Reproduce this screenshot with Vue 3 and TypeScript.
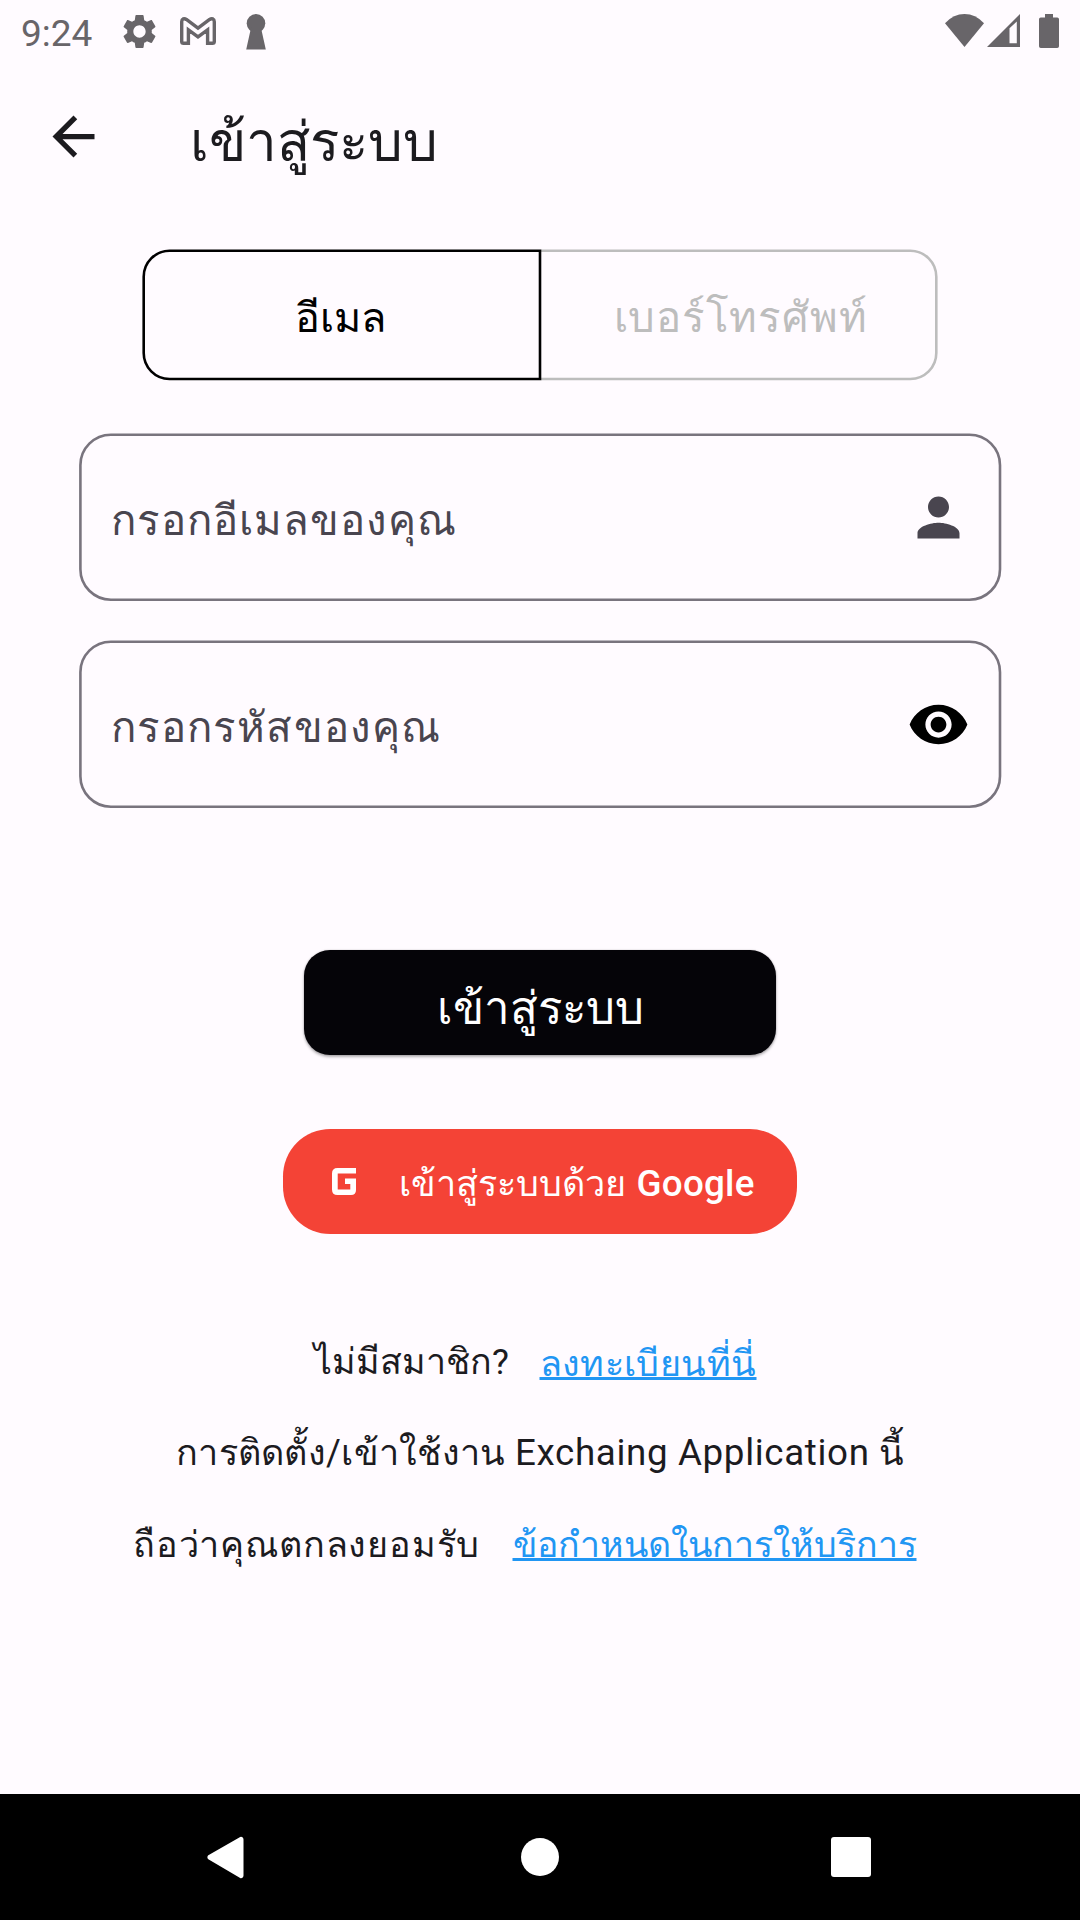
<script setup lang="ts">
interface Field {
  id: string
  label: string
  icon: 'person' | 'eye'
}

const fields: Field[] = [
  { id: 'email', label: 'กรอกอีเมลของคุณ', icon: 'person' },
  { id: 'password', label: 'กรอกรหัสของคุณ', icon: 'eye' },
]
</script>

<template>
  <div class="screen">
    <header class="status">
      <span class="clock">9:24</span>
      <svg class="gear" viewBox="0 0 24 24"><path d="M19.14 12.94c.04-.3.06-.61.06-.94 0-.32-.02-.64-.07-.94l2.03-1.58c.18-.14.23-.41.12-.61l-1.92-3.32c-.12-.22-.37-.29-.59-.22l-2.39.96c-.5-.38-1.03-.7-1.62-.94l-.36-2.54c-.04-.24-.24-.41-.48-.41h-3.84c-.24 0-.43.17-.47.41l-.36 2.54c-.59.24-1.13.57-1.62.94l-2.39-.96c-.22-.08-.47 0-.59.22L2.74 8.87c-.12.21-.08.47.12.61l2.03 1.58c-.05.3-.09.63-.09.94s.02.64.07.94l-2.03 1.58c-.18.14-.23.41-.12.61l1.92 3.32c.12.22.37.29.59.22l2.39-.96c.5.38 1.03.7 1.62.94l.36 2.54c.05.24.24.41.48.41h3.84c.24 0 .44-.17.47-.41l.36-2.54c.59-.24 1.13-.56 1.62-.94l2.39.96c.22.08.47 0 .59-.22l1.92-3.32c.12-.22.07-.47-.12-.61l-2.01-1.58zM12 15.6c-1.98 0-3.6-1.62-3.6-3.6s1.62-3.6 3.6-3.6 3.6 1.62 3.6 3.6-1.62 3.6-3.6 3.6z" /></svg>
      <svg class="mail" viewBox="0 0 36 28"><path d="M3.6 26.2H8.4V12.8L18 19.8L27.600 12.8V26.200H32.400Q34.300 26.200 34.300 24.400V4.800C34.300 1.700 31.800 1 29.600 2.500L18 11.200L6.400 2.500C4.200 1 1.700 1.700 1.700 4.800V24.400Q1.700 26.200 3.600 26.200Z" fill="none" stroke="currentColor" stroke-width="3.400" /></svg>
      <svg class="keyhole" viewBox="0 0 20 36"><circle cx="10" cy="9.300" r="9.300" /><path d="M5.200 13h9.600L19.800 35.600H.2z" /></svg>
      <span class="spacer"></span>
      <svg class="wifi" viewBox="0 0 39 33"><path d="M19.500 33L0 9.200Q8.500 0 19.500 0T39 9.200z" /></svg>
      <svg class="signal" viewBox="0 0 33 33"><path fill-rule="evenodd" d="M33 0V33H0zM29.800 7.500L22.500 14.200V29.300H29.800z" /></svg>
      <svg class="battery" viewBox="0 0 20 34"><path d="M6 0h8v3.400h4.200q1.800 0 1.800 1.800v27q0 1.800-1.800 1.800H1.800Q0 34 0 32.200v-27Q0 3.400 1.800 3.400H6z" /></svg>
    </header>

    <div class="appbar">
      <svg class="back" viewBox="0 0 24 24"><path d="M20 11H7.830l5.590-5.590L12 4l-8 8 8 8 1.410-1.410L7.830 13H20v-2z" /></svg>
      <h1>เข้าสู่ระบบ</h1>
    </div>

    <div class="tabs">
      <div class="tab active">
        <svg class="frame" viewBox="0 0 400 132"><path d="M398 1.700H27.500A26 26 0 0 0 1.700 27.700V104A26 26 0 0 0 27.500 130H398Z" /></svg>
        <span class="t-email">อีเมล</span>
      </div>
      <div class="tab">
        <svg class="frame" viewBox="0 0 398 132"><path d="M0 1.700H369.300A26 26 0 0 1 395.300 27.700V104A26 26 0 0 1 369.300 130H0" /></svg>
        <span class="t-phone">เบอร์โทรศัพท์</span>
      </div>
    </div>

    <form class="fields">
      <div v-for="f in fields" :key="f.id" class="field">
        <svg class="frame" viewBox="0 0 923 168"><rect x="1.400" y="1.700" width="919.600" height="165" rx="30.500" /></svg>
        <span :class="['label', f.id]">{{ f.label }}</span>
        <svg v-if="f.icon === 'person'" class="ico" viewBox="0 0 24 24"><path d="M12 12c2.210 0 4-1.790 4-4s-1.790-4-4-4-4 1.790-4 4 1.790 4 4 4zm0 2c-2.670 0-8 1.340-8 4v2h16v-2c0-2.660-5.330-4-8-4z" /></svg>
        <svg v-else class="ico dark" viewBox="0 0 24 24"><path d="M12 4.500C7 4.500 2.730 7.610 1 12c1.730 4.390 6 7.500 11 7.500s9.270-3.110 11-7.500c-1.730-4.390-6-7.500-11-7.500zM12 17c-2.760 0-5-2.240-5-5s2.240-5 5-5 5 2.240 5 5-2.240 5-5 5zm0-8c-1.660 0-3 1.340-3 3s1.340 3 3 3 3-1.340 3-3-1.340-3-3-3z" /></svg>
      </div>
    </form>

    <button class="login" type="button"><span>เข้าสู่ระบบ</span></button>

    <button class="google" type="button">
      <svg viewBox="0 0 24 27"><path d="M24 0V5.600H5.700V21.600H18.300V16H13V10.600H24V22Q24 27 19 27H5.500Q0 27 0 21.500V5.500Q0 0 5.500 0z" /></svg>
      <span class="g-th">เข้าสู่ระบบด้วย</span>
      <span class="g-en">Google</span>
    </button>

    <footer class="notes">
      <p class="r1"><span>ไม่มีสมาชิก?</span><a>ลงทะเบียนที่นี่</a></p>
      <p class="r2"><span>การติดตั้ง/เข้าใช้งาน</span><span class="en">Exchaing Application</span><span>นี้</span></p>
      <p class="r3"><span>ถือว่าคุณตกลงยอมรับ</span><a>ข้อกำหนดในการให้บริการ</a></p>
    </footer>

    <nav class="nav">
      <svg class="n-back" viewBox="0 0 37 43"><path d="M33.500 2.500L2.500 20.300Q1.200 21.300 2.500 22.300L33.500 40.500Q35 41 35 39.500V3.500Q35 2 33.500 2.500Z" stroke="#fff" stroke-width="3" stroke-linejoin="round" /></svg>
      <span class="n-home"></span>
      <span class="n-recent"></span>
    </nav>
  </div>
</template>

<style>
body {
  background: #fffbff;
}
</style>

<style scoped>
.screen {
  width: 1080px;
  height: 1920px;
  overflow: hidden;
  display: flex;
  flex-direction: column;
  background: #fffbff;
  color: #1c1b1f;
  font-family: Roboto, "Noto Sans", "Noto Sans CJK SC", sans-serif;
  white-space: nowrap;
}
svg {
  display: block;
  flex: none;
  fill: currentColor;
}
.status {
  height: 63px;
  display: flex;
  align-items: flex-start;
  color: #686569;
  box-sizing: border-box;
  padding: 0 21px;
}
.clock {
  width: 98px;
  font-size: 37px;
  line-height: 40px;
  margin-top: 14px;
}
.gear { width: 41px; height: 41px; margin-top: 11px; }
.mail { width: 36px; height: 28px; margin: 17px 0 0 20px; }
.keyhole { width: 20px; height: 36px; margin: 14px 0 0 30px; }
.spacer { flex: 1; }
.wifi { width: 39px; height: 33px; margin-top: 14px; }
.signal { width: 33px; height: 33px; margin: 14px 0 0 3px; }
.battery { width: 20px; height: 34px; margin: 14px 0 0 19px; }

.appbar {
  height: 147px;
  flex: none;
  display: flex;
  align-items: center;
  padding-left: 42px;
}
.back { width: 63px; height: 63px; }
h1 {
  margin: 10px 0 0 84.500px;
  font-size: 54.800px;
  line-height: 80px;
  font-weight: 400;
}

.tabs {
  display: flex;
  height: 132px;
  margin: 39px 0 0 142px;
}
.tab {
  position: relative;
  width: 398px;
  height: 132px;
  color: #bdbdbd;
  line-height: 137px;
}
.tab.active {
  width: 400px;
  margin-right: -1px;
  color: #000;
  z-index: 1;
}
.frame {
  position: absolute;
  inset: 0;
  width: 100%;
  height: 100%;
  fill: none;
  stroke: currentColor;
  stroke-width: 2.600px;
}
.t-email { margin-left: 152.500px; font-size: 41.500px; letter-spacing: 0.300px; }
.t-phone { margin-left: 72.500px; font-size: 42px; letter-spacing: 0.800px; }

.fields {
  display: flex;
  flex-direction: column;
  gap: 39px;
  margin: 52px 0 0 79px;
}
.field {
  position: relative;
  width: 923px;
  height: 168px;
  display: flex;
  align-items: center;
  justify-content: space-between;
  box-sizing: border-box;
  padding: 0 32px;
  color: #49454f;
}
.field .frame { color: #79747e; }
.label { font-size: 42px; line-height: 60px; padding-top: 7px; letter-spacing: 1px; }
.label.password { letter-spacing: 1.080px; }
.ico { width: 63px; height: 63px; }
.ico.dark { color: #000; }

button {
  border: 0;
  padding: 0;
  font-family: inherit;
  display: flex;
  align-items: center;
  color: #fff;
  height: 105px;
  flex: none;
}
.login {
  width: 472px;
  margin: 142px auto 0;
  justify-content: center;
  border-radius: 26px;
  background: #050408;
  box-shadow: 0 2px 3px rgba(0, 0, 0, 0.300), 0 0 2px rgba(0, 0, 0, 0.200);
  font-size: 45.600px;
}
.login span { padding-top: 12px; line-height: 70px; }
.google {
  width: 514px;
  margin: 73.500px auto 0;
  box-sizing: border-box;
  padding-left: 49px;
  border-radius: 47.250px;
  background: #f44336;
}
.google svg { width: 24px; height: 27px; }
.g-th { font-size: 36px; line-height: 50px; margin: 5px 0 0 43px; width: 237.500px; text-align: left; }
.g-en { font-size: 36.750px; line-height: 50px; margin-top: 5px; font-weight: 500; letter-spacing: 0.260px; }

.notes {
  display: flex;
  flex-direction: column;
  gap: 31.500px;
  margin-top: 98px;
}
p {
  margin: 0;
  display: flex;
  height: 60px;
  line-height: 60px;
  font-size: 36px;
}
a {
  color: #2196f3;
  text-decoration: underline;
  text-decoration-thickness: 2.600px;
  text-underline-offset: 0.500px;
  text-decoration-skip-ink: none;
}
.r1 { padding-left: 314px; }
.r1 span { width: 225.500px; font-size: 35.800px; }
.r1 a { letter-spacing: 0.400px; margin-top: 2px; }
.r2 { padding-left: 176px; }
.r2 span:first-child { width: 339px; letter-spacing: 0.300px; }
.r2 .en { width: 364px; font-size: 36.750px; letter-spacing: 0.640px; }
.r3 { padding-left: 133px; }
.r3 span { width: 379.500px; letter-spacing: 0.820px; }
.r3 a { font-size: 35.700px; }

.nav {
  height: 126px;
  margin-top: auto;
  flex: none;
  display: flex;
  align-items: center;
  background: #000;
  color: #fff;
}
.n-back { width: 37px; height: 43px; margin-left: 206.500px; }
.n-home { width: 38.500px; height: 38.500px; border-radius: 50%; background: #fff; margin-left: 277.300px; }
.n-recent { width: 40px; height: 40px; border-radius: 3px; background: #fff; margin-left: 271.700px; }
</style>
